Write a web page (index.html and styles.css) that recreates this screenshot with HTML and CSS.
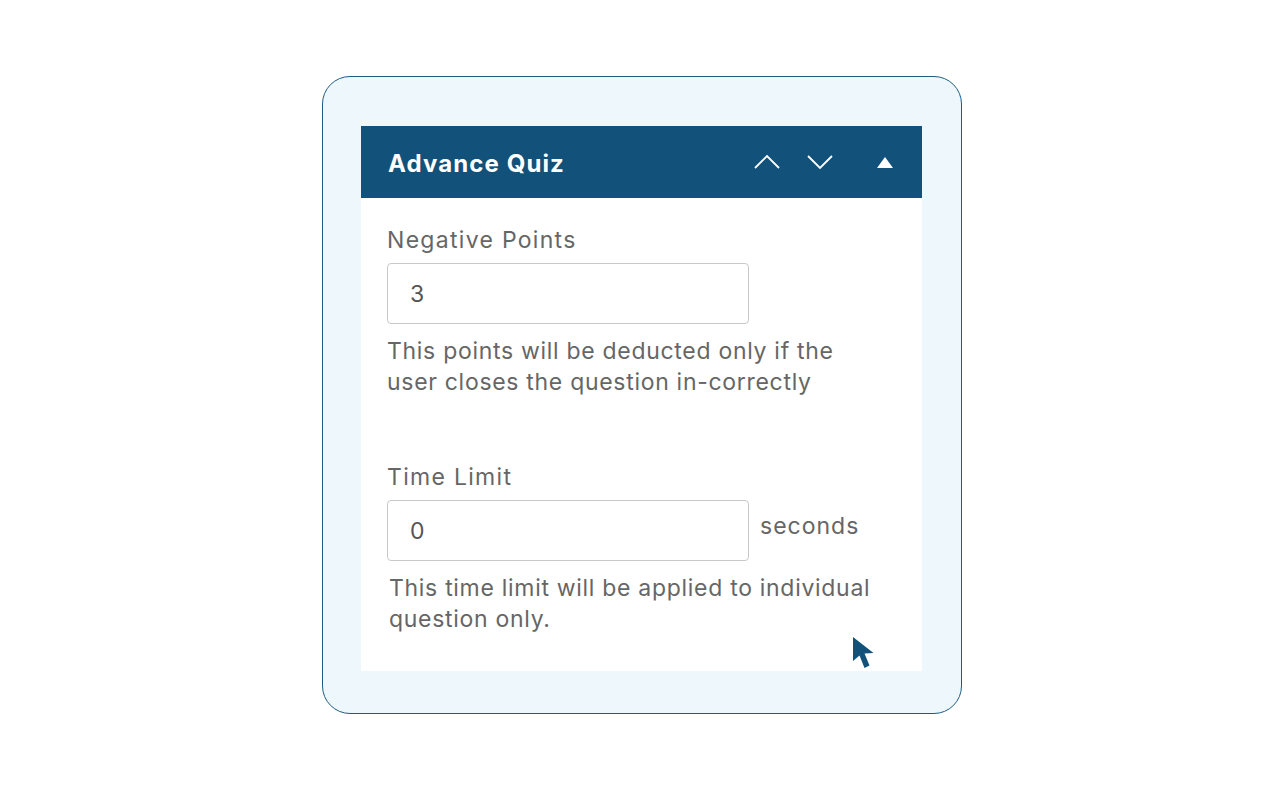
FILE: index.html
```html
<!DOCTYPE html>
<html lang="en">
<head>
    <meta charset="UTF-8">
    <meta name="viewport" content="width=device-width, initial-scale=1.0">
    <title>Advance Quiz</title>
    <link rel="stylesheet" href="styles.css">
</head>
<body>
    <div class="frame">
        <div class="panel">
            <div class="panel-head">
                <h2>Advance Quiz</h2>
                <div class="tools">
                    <svg class="chev" width="26" height="16" viewBox="0 0 26 16"><path d="M1 14 L13 2 L25 14" fill="none" stroke="#fff" stroke-width="1.8"/></svg>
                    <svg class="chev" width="26" height="16" viewBox="0 0 26 16"><path d="M1 2 L13 14 L25 2" fill="none" stroke="#fff" stroke-width="1.8"/></svg>
                    <svg class="tri" width="16" height="11" viewBox="0 0 16 11"><path d="M8 0 L16 11 L0 11 Z" fill="#fff"/></svg>
                </div>
            </div>
            <div class="panel-body">
                <div class="field">
                    <label>Negative Points</label>
                    <div class="input-row">
                        <input type="text" value="3">
                    </div>
                    <p class="help">This points will be deducted only if the<br>user closes the question in-correctly</p>
                </div>
                <div class="field second">
                    <label>Time Limit</label>
                    <div class="input-row">
                        <input type="text" value="0">
                        <span class="unit">seconds</span>
                    </div>
                    <p class="help indent">This time limit will be applied to individual<br>question only.</p>
                </div>
                <svg class="pointer" width="24" height="34" viewBox="0 0 24 34"><path d="M1 1 L1 25 L7.5 19.5 L12.5 32 L17.5 29.5 L12.5 17.5 L21.5 17 Z" fill="#12527a"/></svg>
            </div>
        </div>
    </div>
</body>
</html>
```

FILE: styles.css
```css
body {
    margin: 0;
    background: #fff;
    font-family: Inter, "Open Sans", sans-serif;
}
.frame {
    box-sizing: border-box;
    width: 640px;
    height: 638px;
    margin: 76px 0 0 322px;
    padding: 49px 39px 0 38px;
    border: 1.5px solid #1c5c83;
    border-radius: 28px;
    background: #eef8fc;
}
.panel {
    width: 561px;
    background: #fff;
}
.panel-head {
    display: flex;
    align-items: center;
    justify-content: space-between;
    height: 72px;
    padding: 0 29px 0 27px;
    background: #12527a;
}
.panel-head h2 {
    margin: 2px 0 0 0;
    color: #fff;
    font-size: 24px;
    font-weight: 700;
    letter-spacing: 1.1px;
}
.tools {
    display: flex;
    align-items: center;
    gap: 27px;
}
.tools .tri {
    margin-left: 17px;
}
.panel-body {
    position: relative;
    height: 473px;
    padding: 28px 0 0 26px;
    box-sizing: border-box;
    color: #666;
}
.field label {
    display: block;
    font-size: 23px;
    line-height: 28px;
    letter-spacing: 1.3px;
    color: #666;
}
.input-row {
    display: flex;
    align-items: flex-start;
    margin-top: 9px;
}
.input-row input {
    box-sizing: border-box;
    width: 362px;
    height: 61px;
    padding: 0 22px;
    border: 1px solid #c9c9c9;
    border-radius: 4px;
    font-family: inherit;
    font-size: 23px;
    color: #555;
    background: #fff;
}
.unit {
    margin: 12px 0 0 11px;
    font-size: 23px;
    letter-spacing: 1px;
    color: #666;
}
.help {
    margin: 12px 0 0 0;
    font-size: 23px;
    line-height: 31px;
    letter-spacing: 0.7px;
    color: #666;
}
.help.indent {
    margin-left: 2px;
}
.field.second {
    margin-top: 65px;
}
.pointer {
    position: absolute;
    left: 491px;
    top: 438px;
}
```
